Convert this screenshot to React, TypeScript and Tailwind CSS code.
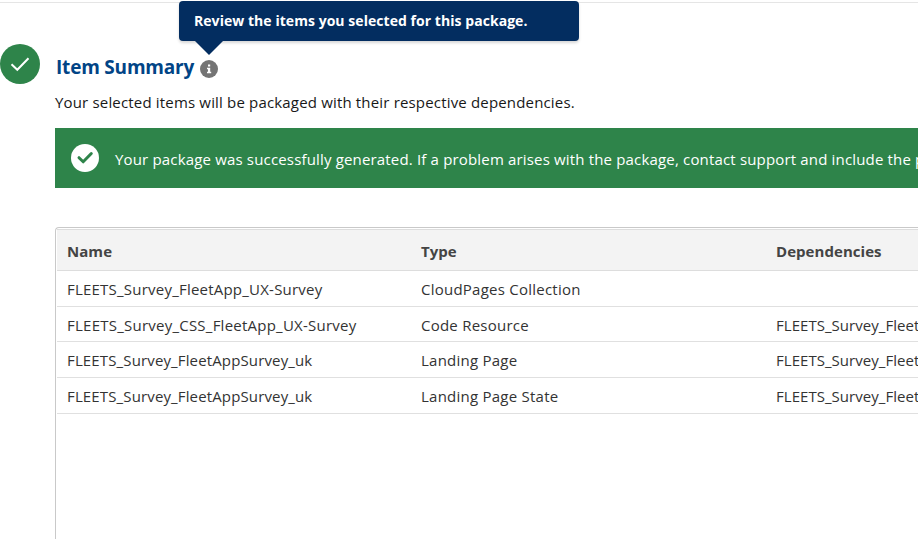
const rows = [
  { name: 'FLEETS_Survey_FleetApp_UX-Survey', type: 'CloudPages Collection', dep: '', size: 'h-9', tracking: 'tracking-[0.22px]' },
  { name: 'FLEETS_Survey_CSS_FleetApp_UX-Survey', type: 'Code Resource', dep: 'FLEETS_Survey_Fleet', size: 'h-[35px]', tracking: 'tracking-[0.24px]' },
  { name: 'FLEETS_Survey_FleetAppSurvey_uk', type: 'Landing Page', dep: 'FLEETS_Survey_Fleet', size: 'h-9', tracking: 'tracking-[0.14px]' },
  { name: 'FLEETS_Survey_FleetAppSurvey_uk', type: 'Landing Page State', dep: 'FLEETS_Survey_Fleet', size: 'h-9', tracking: 'tracking-[0.14px]' },
];

function Tooltip() {
  return (
    <div className="absolute -top-[59px] -left-[21px] h-10 w-[400px] rounded bg-[#032d60] px-[15px] text-[14px] leading-[39px] font-bold tracking-[0.05px] whitespace-nowrap text-white shadow-[0_2px_3px_rgba(0,0,0,0.16)]">
      Review the items you selected for this package.
      <svg className="absolute top-[39px] left-[15px]" width="30" height="16" viewBox="0 0 30 16">
        <path d="M0 0H30L15 15Z" fill="#032d60" />
      </svg>
    </div>
  );
}

export default function App() {
  return (
    <div className="h-[539px] w-[918px] overflow-hidden bg-white pt-0.5 font-['Open_Sans','Noto_Sans',sans-serif] text-[#181818]">
      <div className="h-px bg-[#e5e5e5]" />
      <div className="flex pt-[41px]">
        <div className="flex size-10 shrink-0 items-center justify-center rounded-full bg-[#2e844a]">
          <svg width="40" height="40" viewBox="0 0 40 40" fill="none">
            <path d="M11.5 20.2L17.3 25.8L28.5 14.3" stroke="white" strokeWidth="2" />
          </svg>
        </div>
        <main className="ml-[15px] w-[863px] shrink-0">
          <div className="flex h-[46px] items-center gap-1.5">
            <h1 className="w-[139px] pl-px text-[19px] font-bold tracking-[-0.2px] whitespace-nowrap text-[#014486]">Item Summary</h1>
            <div className="relative mt-[3px] size-[18px]">
              <svg width="18" height="18" viewBox="0 0 18 18">
                <circle cx="9" cy="9" r="9" fill="#747474" />
                <path d="M8 4.5h2.2v2H8zM7 7.7h3.2v4h1v1.5H7v-1.5h1V9.2H7z" fill="white" />
              </svg>
              <Tooltip />
            </div>
          </div>
          <p className="h-[38px] text-[15px] leading-6 tracking-[0.17px] whitespace-nowrap">Your selected items will be packaged with their respective dependencies.</p>
          <div className="flex h-[60px] items-center bg-[#2e844a] pl-4 text-white">
            <svg className="shrink-0" width="28" height="28" viewBox="0 0 28 28" fill="none">
              <circle cx="14" cy="14" r="14" fill="white" />
              <path d="M8 13.7L12.2 17.8L20.3 9.5" stroke="#2e844a" strokeWidth="3" strokeLinecap="round" strokeLinejoin="round" />
            </svg>
            <span className="ml-4 pt-0.5 text-[15px] tracking-[0.167px] whitespace-nowrap">Your package was successfully generated. If a problem arises with the package, contact support and include the p</span>
          </div>
          <section className="mt-[39px] h-[340px] rounded-tl border-t border-l border-[#c9c9c9] pt-px pl-px">
            <div className="grid h-[42px] grid-cols-[354px_355px_1fr] items-center border-y border-[#dddddd] bg-[#f3f3f3] pt-0.5 pl-2.5 text-[15px] font-bold tracking-[0.05px] text-[#444444]">
              <span>Name</span>
              <span>Type</span>
              <span>Dependencies</span>
            </div>
            {rows.map((r, i) => (
              <div key={i} className={`grid grid-cols-[354px_355px_1fr] items-center border-b border-[#e0e0e0] pt-0.5 pl-2.5 text-[15px] tracking-[0.24px] whitespace-nowrap text-[#333333] ${r.size}`}>
                <span className={r.tracking}>{r.name}</span>
                <span>{r.type}</span>
                <span className="tracking-[0.04px]">{r.dep}</span>
              </div>
            ))}
          </section>
        </main>
      </div>
    </div>
  );
}
